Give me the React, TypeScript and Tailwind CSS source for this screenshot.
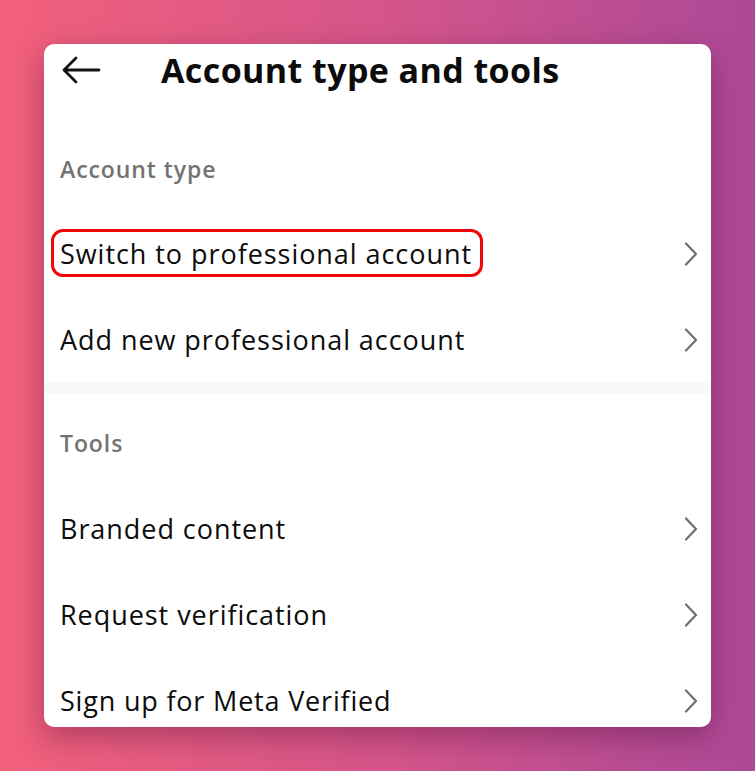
import { ReactNode } from 'react';

function Chevron() {
  return (
    <svg width="14" height="24" viewBox="0 0 14 24" fill="none" className="shrink-0">
      <path d="M2 1.5 L12 12 L2 22.5" stroke="#6f6f6f" strokeWidth="2.2" strokeLinecap="round" strokeLinejoin="round" />
    </svg>
  );
}

function BackArrow() {
  return (
    <svg width="40" height="30" viewBox="0 0 40 30" fill="none">
      <path d="M38 15 H3 M15 3 L3 15 L15 27" stroke="#111" strokeWidth="2.8" strokeLinecap="round" strokeLinejoin="round" />
    </svg>
  );
}

function Row({ children }: { children: ReactNode }) {
  return (
    <div className="flex h-[86px] items-center justify-between pl-4 pr-[13px]">
      <div className="text-[27px] leading-[32px] tracking-[0.035em] text-[#0c0c0c]">{children}</div>
      <Chevron />
    </div>
  );
}

export default function App() {
  return (
    <div
      className="h-[771px] w-[755px] overflow-hidden bg-gradient-to-r from-[#f2607b] via-[#d6558a] to-[#ac4897] pl-[44px] pt-[44px]"
      style={{ fontFamily: '"Open Sans", "Noto Sans", sans-serif' }}
    >
      <div className="h-[683px] w-[667px] overflow-hidden rounded-[10px] bg-white shadow-[0_10px_30px_rgba(60,0,40,0.35)]">
        <div className="flex h-[52px] items-center pl-[17px]">
          <BackArrow />
          <h1 className="ml-[60px] text-[34px] font-bold leading-[40px] tracking-[0.012em] text-[#0c0c0c]">Account type and tools</h1>
        </div>
        <div className="pl-4 pt-[59px] pb-[28px] text-[23px] font-semibold leading-[28px] tracking-[0.04em] text-[#737373]">Account type</div>
        <Row>
          <span className="relative">
            Switch to professional account
            <span className="absolute -left-[9px] -right-[11px] -top-[6px] -bottom-[5px] rounded-[12px] border-[3px] border-[#f00808]" />
          </span>
        </Row>
        <Row>Add new professional account</Row>
        <div className="h-[10px] bg-[#f8f8f8]" />
        <div className="pl-4 pt-[36px] pb-[29px] text-[23px] font-semibold leading-[28px] tracking-[0.04em] text-[#737373]">Tools</div>
        <Row>Branded content</Row>
        <Row>Request verification</Row>
        <Row>
          <span className="tracking-[0.03em]">Sign up for Meta Verified</span>
        </Row>
      </div>
    </div>
  );
}
